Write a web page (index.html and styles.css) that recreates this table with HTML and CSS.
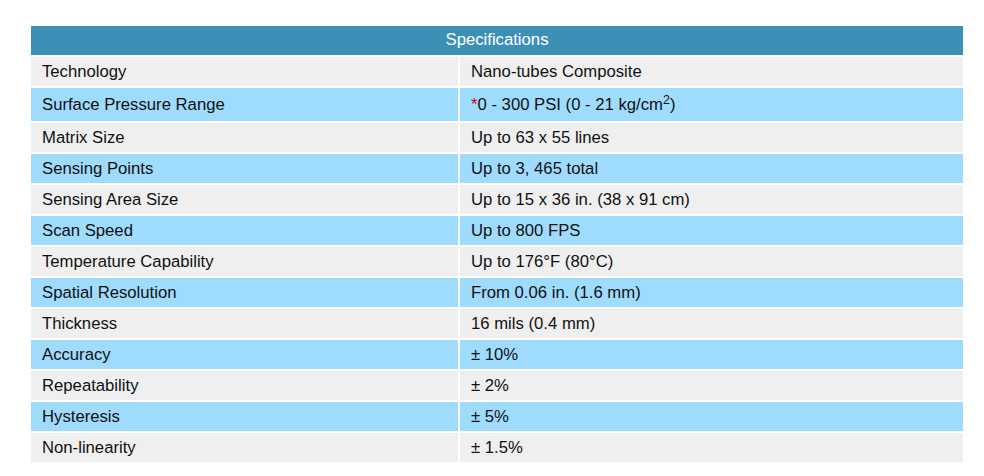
FILE: index.html
```html
<!DOCTYPE html>
<html>
<head>
<meta charset="utf-8">
<link rel="stylesheet" href="styles.css">
</head>
<body>
<table class="spec">
  <colgroup>
    <col class="col-label">
    <col class="col-value">
  </colgroup>
  <thead>
    <tr><th colspan="2" class="spec-title">Specifications</th></tr>
  </thead>
  <tbody>
    <tr class="odd"><td>Technology</td><td>Nano-tubes Composite</td></tr>
    <tr class="even tall"><td>Surface Pressure Range</td><td><span class="star">*</span>0 - 300 PSI (0 - 21 kg/cm<sup>2</sup>)</td></tr>
    <tr class="odd"><td>Matrix Size</td><td>Up to 63 x 55 lines</td></tr>
    <tr class="even"><td>Sensing Points</td><td>Up to 3, 465 total</td></tr>
    <tr class="odd"><td>Sensing Area Size</td><td>Up to 15 x 36 in. (38 x 91 cm)</td></tr>
    <tr class="even"><td>Scan Speed</td><td>Up to 800 FPS</td></tr>
    <tr class="odd"><td>Temperature Capability</td><td>Up to 176°F (80°C)</td></tr>
    <tr class="even"><td>Spatial Resolution</td><td>From 0.06 in. (1.6 mm)</td></tr>
    <tr class="odd"><td>Thickness</td><td>16 mils (0.4 mm)</td></tr>
    <tr class="even"><td>Accuracy</td><td>± 10%</td></tr>
    <tr class="odd"><td>Repeatability</td><td>± 2%</td></tr>
    <tr class="even"><td>Hysteresis</td><td>± 5%</td></tr>
    <tr class="odd"><td>Non-linearity</td><td>± 1.5%</td></tr>
  </tbody>
</table>
</body>
</html>
```

FILE: styles.css
```css
html, body {
  margin: 0;
  background: #ffffff;
}
body {
  padding: 24px 0 0 29px;
  font-family: "Liberation Sans", Arial, sans-serif;
  font-size: 16.7px;
  color: #111111;
}
.spec {
  width: 936px;
  border-collapse: separate;
  border-spacing: 2px;
  table-layout: fixed;
}
.col-label {
  width: 427px;
}
.spec-title {
  background: #3e8fb6;
  color: #ffffff;
  font-weight: normal;
  font-size: 16.7px;
  height: 29px;
  padding: 0 0 2px;
  box-sizing: border-box;
  text-align: center;
  vertical-align: middle;
}
.spec td {
  height: 29px;
  padding: 0 11px;
  vertical-align: middle;
  line-height: 18px;
  box-sizing: border-box;
}
.odd td {
  background: #efefef;
}
.even td {
  background: #9fdbfd;
}
.spec tr.tall td {
  height: 33px;
}
.star {
  color: #d0021b;
}
sup {
  font-size: 12.5px;
  line-height: 0;
  vertical-align: 6px;
}
```
